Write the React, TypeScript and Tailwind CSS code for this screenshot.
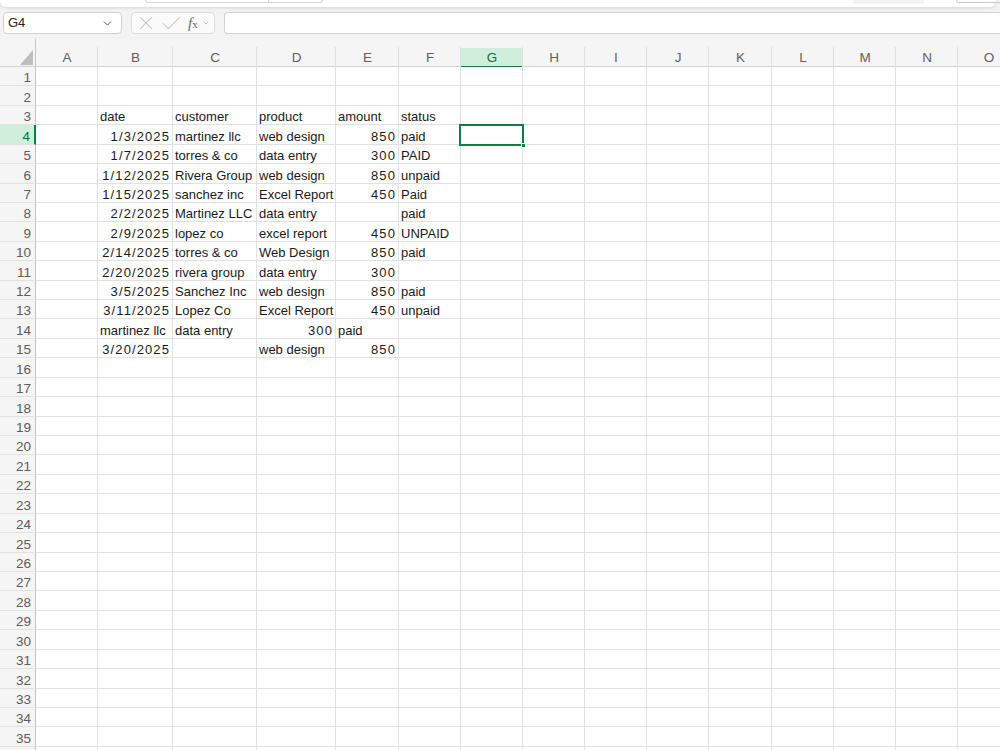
import React from "react";
import { X, Check, ChevronDown } from "lucide-react";

const COLS = ["A", "B", "C", "D", "E", "F", "G", "H", "I", "J", "K", "L", "M", "N", "O"];

const GRID =
  "grid grid-cols-[36px_62px_75px_84px_79px_63px_62px_62px_62px_62px_62px_63px_62px_62px_62px_62px]";

type Cell = { v: string; right?: boolean };

// rows keyed by row number, columns B..F
const DATA: Record<number, Record<string, Cell>> = {
  3: { B: { v: "date" }, C: { v: "customer" }, D: { v: "product" }, E: { v: "amount" }, F: { v: "status" } },
  4: { B: { v: "1/3/2025", right: true }, C: { v: "martinez llc" }, D: { v: "web design" }, E: { v: "850", right: true }, F: { v: "paid" } },
  5: { B: { v: "1/7/2025", right: true }, C: { v: "torres & co" }, D: { v: "data entry" }, E: { v: "300", right: true }, F: { v: "PAID" } },
  6: { B: { v: "1/12/2025", right: true }, C: { v: "Rivera Group" }, D: { v: "web design" }, E: { v: "850", right: true }, F: { v: "unpaid" } },
  7: { B: { v: "1/15/2025", right: true }, C: { v: "sanchez inc" }, D: { v: "Excel Report" }, E: { v: "450", right: true }, F: { v: "Paid" } },
  8: { B: { v: "2/2/2025", right: true }, C: { v: "Martinez LLC" }, D: { v: "data entry" }, F: { v: "paid" } },
  9: { B: { v: "2/9/2025", right: true }, C: { v: "lopez co" }, D: { v: "excel report" }, E: { v: "450", right: true }, F: { v: "UNPAID" } },
  10: { B: { v: "2/14/2025", right: true }, C: { v: "torres & co" }, D: { v: "Web Design" }, E: { v: "850", right: true }, F: { v: "paid" } },
  11: { B: { v: "2/20/2025", right: true }, C: { v: "rivera group" }, D: { v: "data entry" }, E: { v: "300", right: true } },
  12: { B: { v: "3/5/2025", right: true }, C: { v: "Sanchez Inc" }, D: { v: "web design" }, E: { v: "850", right: true }, F: { v: "paid" } },
  13: { B: { v: "3/11/2025", right: true }, C: { v: "Lopez Co" }, D: { v: "Excel Report" }, E: { v: "450", right: true }, F: { v: "unpaid" } },
  14: { B: { v: "martinez llc" }, C: { v: "data entry" }, D: { v: "300", right: true }, E: { v: "paid" } },
  15: { B: { v: "3/20/2025", right: true }, D: { v: "web design" }, E: { v: "850", right: true } },
};

// row 36 only peeks in at the bottom edge
const ROWS = Array.from({ length: 36 }, (_, i) => i + 1);

export default function App() {
  return (
    <div
      className="w-[1000px] h-[750px] overflow-hidden bg-[#f3f3f3] text-[#1a1a1a]"
      style={{ fontFamily: '"Liberation Sans", Arial, sans-serif' }}
    >
      {/* ribbon edge */}
      <div className="relative h-[7px] bg-white rounded-b-[6px] shadow-[0_1px_3px_rgba(0,0,0,0.12)] mr-[4px]">
        <div className="absolute left-[145px] top-0 w-[178px] h-[3px] border-b border-x border-[#d6d6d6] rounded-b-[3px]">
          <div className="absolute left-[122px] top-0 h-[3px] border-l border-[#d6d6d6]" />
        </div>
        <div className="absolute left-[853px] top-0 w-[71px] h-[4px] bg-[#f3f3f3]" />
        <div className="absolute left-[956px] top-0 w-[50px] h-[3px] border-b border-l border-[#c8c8c8] rounded-bl-[3px]" />
      </div>

      {/* formula bar */}
      <div className="flex items-center gap-[9px] pt-[5px] pb-[5px] pl-[3px]">
        <div className="flex items-center justify-between w-[119px] h-[22px] bg-white border border-[#d1d1d1] rounded-[4px] pl-[4px] pr-[7px]">
          <span className="text-[13px] text-[#242424]">G4</span>
          <ChevronDown className="w-[13px] h-[13px] text-[#424242]" strokeWidth={1.6} />
        </div>
        <div className="flex items-center w-[84px] h-[22px] bg-[#fbfbfb] border border-[#dcdcdc] rounded-[4px] pl-[3px]">
          <X className="w-[22px] h-[22px] text-[#bdbdbd]" strokeWidth={1.1} />
          <Check className="w-[25px] h-[25px] text-[#c4c4c4] ml-[2px]" strokeWidth={1} />
          <span
            className="ml-[4px] text-[15px] italic text-[#6b6b6b] leading-none"
            style={{ fontFamily: '"Liberation Serif", "Times New Roman", serif' }}
          >
            f<span className="text-[11px] not-italic">x</span>
          </span>
          <ChevronDown className="w-[8px] h-[8px] text-[#a0a0a0] ml-[4px]" strokeWidth={2} />
        </div>
        <div className="flex-1 h-[22px] bg-white border border-[#d1d1d1] border-r-0 rounded-l-[4px]" />
      </div>

      {/* column headers */}
      <div className={`${GRID} h-[28px] bg-[#f5f5f5] border-b border-[#d2d2d2]`}>
        <div className="relative border-r border-[#c2c2c2]">
          <svg className="absolute left-[20px] top-[11px]" width="13" height="15" viewBox="0 0 13 15">
            <polygon points="13,0 13,15 0,15" fill="#bdbdbd" />
          </svg>
        </div>
        {COLS.map((c) => (
          <div key={c} className="relative flex pt-[9px]">
            <div
              className={`flex-1 flex items-center justify-center text-[13.5px] ${
                c === "G" ? "bg-[#cfeedc] text-[#0f6b38]" : "text-[#616161]"
              }`}
            >
              {c}
            </div>
            {c === "G" && <div className="absolute left-0 right-0 bottom-0 h-[2px] bg-[#107c41]" />}
            <div className="absolute right-0 top-[8px] bottom-[1px] border-r border-[#dedede]" />
          </div>
        ))}
      </div>

      {/* grid */}
      <div className="relative bg-white">
        {ROWS.map((r) => {
          const row = DATA[r] ?? {};
          return (
            <div key={r} className={`${GRID} h-[19.43px]`}>
              <div
                className={`flex items-end justify-end pr-[4px] text-[13.5px] leading-[15px] border-b border-[#e1e1e1] ${
                  r === 4
                    ? "bg-[#cfeedc] text-[#0f6b38] border-r-2 border-r-[#107c41]"
                    : "bg-[#f5f5f5] text-[#5c5c5c] border-r border-r-[#c2c2c2]"
                }`}
              >
                {r <= 35 ? r : ""}
              </div>
              {COLS.map((c) => {
                const cell = row[c];
                return (
                  <div
                    key={c}
                    className={`flex items-end whitespace-nowrap text-[13px] leading-[15px] border-r border-b border-[#e1e1e1] ${
                      cell?.right ? "justify-end pr-[2px] tracking-[1.1px]" : "pl-[2px]"
                    }`}
                  >
                    {cell?.v}
                  </div>
                );
              })}
            </div>
          );
        })}

        {/* selected cell G4 */}
        <div className="absolute left-[459px] top-[57px] w-[65px] h-[22px] border-2 border-[#107c41]">
          <div className="absolute right-[-4px] bottom-[-4px] w-[5px] h-[5px] bg-[#107c41] border border-white" />
        </div>
      </div>
    </div>
  );
}
